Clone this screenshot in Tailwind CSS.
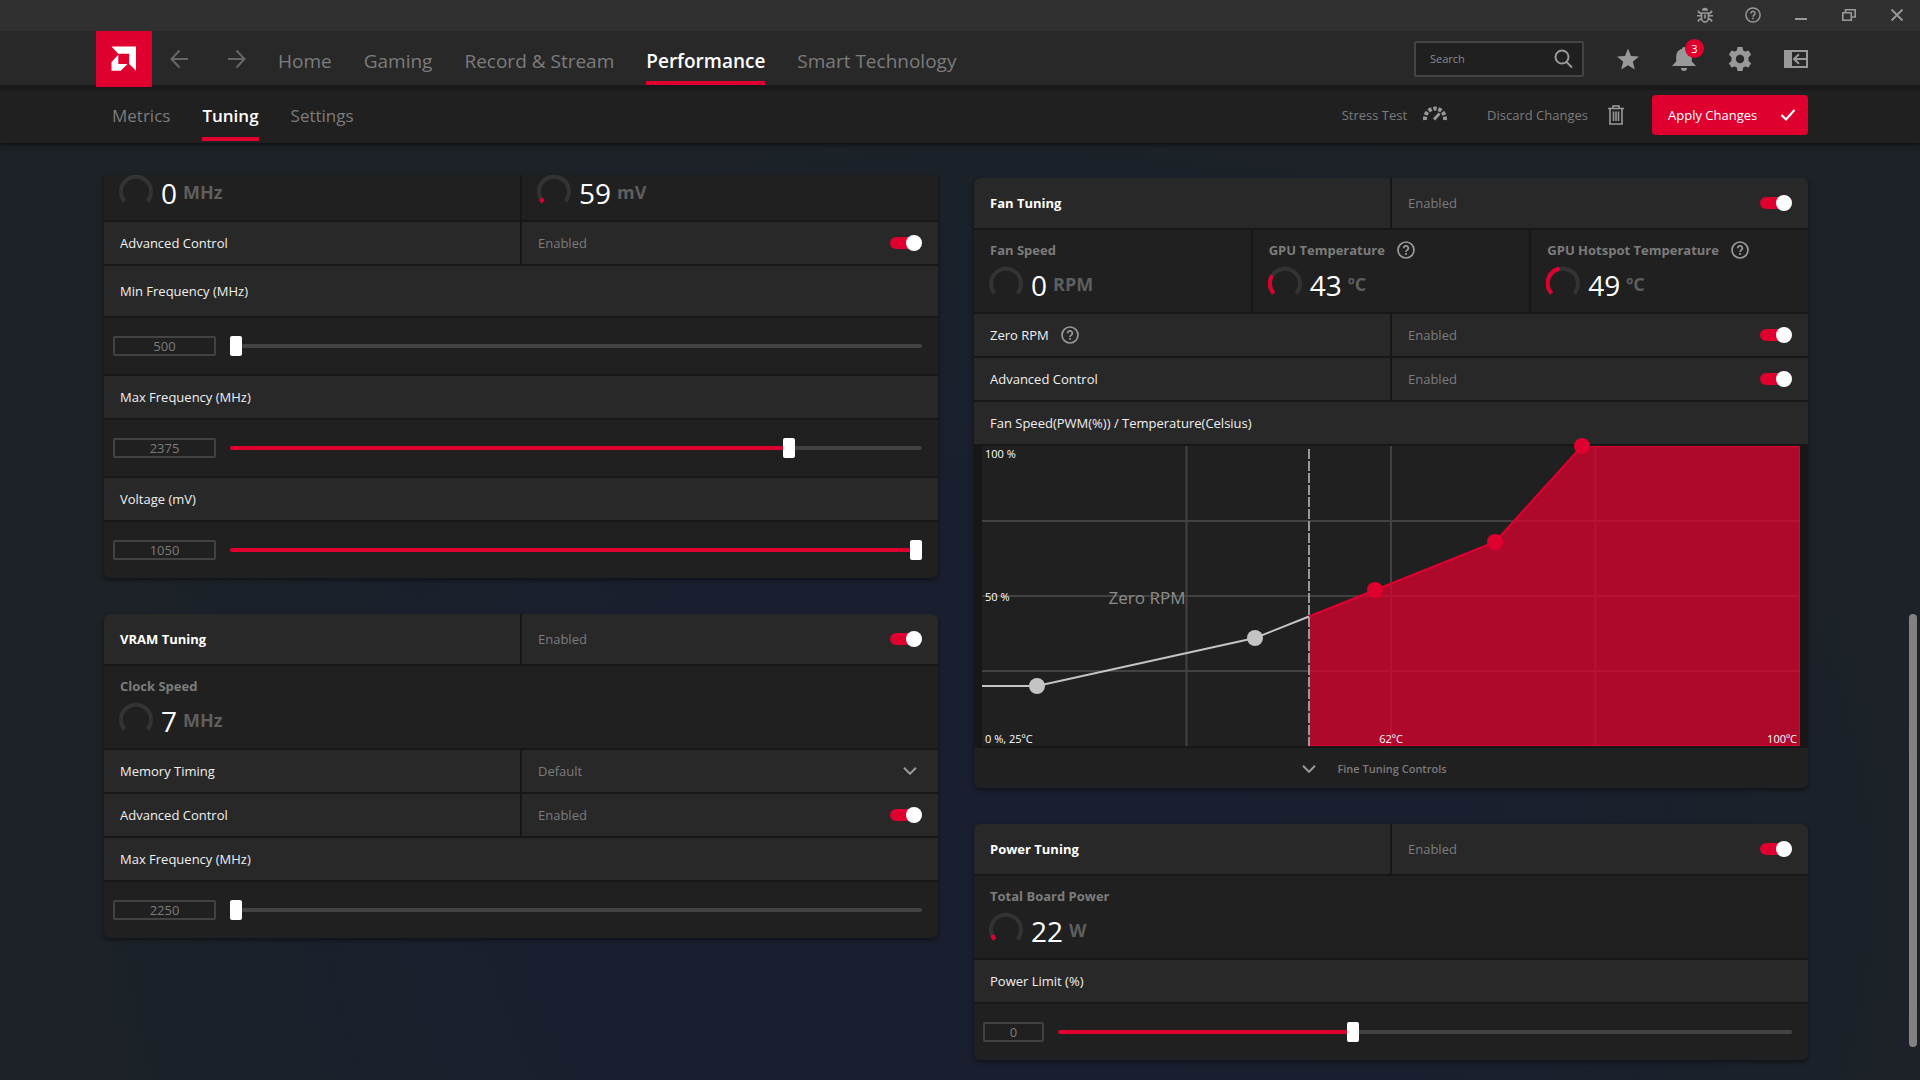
<!DOCTYPE html>
<html lang="en">
<head>
<meta charset="utf-8">
<meta name="viewport" content="width=device-width, initial-scale=1">
<title>Performance Tuning</title>
<script src="https://cdn.jsdelivr.net/npm/@tailwindcss/browser@4"></script>
</head>
<body class="relative flex min-h-screen flex-col overflow-x-hidden bg-[#1c2226] bg-[radial-gradient(ellipse_50%_75%_at_52%_82%,#191f30_0%,#191f2e_50%,#1c2227_100%)] font-['Open_Sans','Noto_Sans',sans-serif] text-[13px] leading-5 text-[#f0f0f0]">

<svg class="hidden" aria-hidden="true">
  <symbol id="help" viewBox="0 0 18 18"><circle cx="9" cy="9" r="8" fill="none" stroke="currentColor" stroke-width="1.7"/><path d="M6.7 7.2a2.3 2.3 0 1 1 3.5 1.9c-.8.5-1.2.9-1.2 1.8" fill="none" stroke="currentColor" stroke-width="1.7"/><rect x="8.1" y="12" width="1.8" height="1.8" fill="currentColor"/></symbol>
  <symbol id="ring" viewBox="0 0 34 34"><path d="M5.6 27.4A15 15 0 1 1 28.4 27.4" fill="none" stroke="#333" stroke-width="4"/></symbol>
</svg>

<!-- Window title bar -->
<div class="flex h-[31px] items-center justify-end gap-8 bg-[#303030] pr-[15px] pb-0.5 text-[#999]">
  <button aria-label="Report a bug"><svg class="size-4" viewBox="0 0 16 16" fill="none" stroke="currentColor" stroke-width="1.6"><path d="M4.6 6h6.8v5.5a3.4 3.4 0 0 1-6.8 0z"/><path d="M0 8.700h4.500M11.500 8.700h4.500M1.500 3.500v1.500l3 2M14.500 3.500v1.500l-3 2M1.500 14.800v-1.500l3-1.800M14.500 14.800v-1.500l-3-1.800M8 7.500v4"/><path d="M5 3.700a3 3 0 0 1 6 0z" fill="currentColor" stroke="none"/></svg></button>
  <button aria-label="Help"><svg class="size-4"><use href="#help"/></svg></button>
  <button aria-label="Minimize"><svg class="size-4" viewBox="0 0 16 16"><path d="M2 12h12" stroke="currentColor" stroke-width="2"/></svg></button>
  <button aria-label="Restore"><svg class="size-4" viewBox="0 0 16 16" fill="none" stroke="currentColor" stroke-width="1.6"><path d="M1.800 5.800h8.500v7.500H1.800zM4.500 5.500V2.800h9.700v7.200H11"/></svg></button>
  <button aria-label="Close"><svg class="size-4" viewBox="0 0 16 16"><path d="M2.500 2.500l11 11M13.500 2.500l-11 11" stroke="currentColor" stroke-width="1.8"/></svg></button>
</div>

<!-- Main navigation -->
<header class="relative z-20 flex h-[54px] bg-[#282828] pr-28 pl-24 shadow-[0_5px_1px_#191919]">
  <a href="#" aria-label="AMD Software" class="h-14 w-14 shrink-0 bg-[#e0002f]"><svg class="size-14" viewBox="0 0 56 56" fill="#fff"><path d="M15.500 15.500H40v24.300L33.200 33V22.700H22.300z"/><path d="M22.300 23.800L15.500 31v8.800h9.200L31.500 33H22.300z"/></svg></a>
  <div class="flex items-center gap-10 pt-0.5 pr-8 pl-[18px] text-[#666]">
    <button aria-label="Back"><svg class="h-5 w-[18px]" viewBox="0 0 18 20" fill="none" stroke="currentColor" stroke-width="2"><path d="M18 10H1.500M9.500 1.500L1.500 10l8 8.500"/></svg></button>
    <button aria-label="Forward"><svg class="h-5 w-[18px]" viewBox="0 0 18 20" fill="none" stroke="currentColor" stroke-width="2"><path d="M0 10h16.500M8.500 1.500l8 8.500-8 8.500"/></svg></button>
  </div>
  <nav class="flex gap-8 text-[19px] leading-[60px] whitespace-nowrap text-[#7c7c7c]">
    <a href="#">Home</a>
    <a href="#">Gaming</a>
    <a href="#">Record &amp; Stream</a>
    <a href="#" class="h-[54px] border-b-4 border-[#e0002f] font-semibold text-white">Performance</a>
    <a href="#">Smart Technology</a>
  </nav>
  <div class="ml-auto flex items-center pt-0.5 text-[#999]">
    <label class="flex h-9 w-[170px] items-center rounded-xs border-2 border-[#444] bg-[#202020] pr-[9px] pl-[14px]">
      <input type="search" placeholder="Search" aria-label="Search" class="w-full min-w-0 bg-transparent text-[11px] outline-none placeholder:text-[#8a8a8a]">
      <svg class="size-5 shrink-0" viewBox="0 0 20 20" fill="none" stroke="currentColor" stroke-width="2"><circle cx="9" cy="8" r="6.5"/><path d="M13.500 13l5.500 5.500"/></svg>
    </label>
    <div class="flex gap-8 pl-8">
      <button aria-label="Favorites"><svg class="size-6" viewBox="0 0 24 24" fill="currentColor"><path d="M12 1.500l3 7.600 8 .5-6.200 5.100 2.100 7.900L12 18.200l-6.900 4.400 2.100-7.900L1 9.600l8-.5z"/></svg></button>
      <button aria-label="Notifications" class="relative"><svg class="size-6" viewBox="0 0 24 24" fill="currentColor"><path d="M12 0c1.200 0 1.800.8 1.800 1.800C18 2.900 19.800 6 19.800 10v4.500L24 19H0l4.200-4.500V10c0-4 1.800-7.100 6-8.200C10.200.8 10.800 0 12 0zM9 21h6a3 3 0 0 1-6 0z"/></svg><span class="absolute -top-2 left-[13px] size-[19px] rounded-full bg-[#e0002f] text-center text-[11px] leading-[19px] text-white">3</span></button>
      <button aria-label="Preferences"><svg class="size-6" viewBox="0 0 24 24" fill="currentColor" fill-rule="evenodd"><path d="M9.500 0h5l.7 3.400 2.100 1.200 3.300-1.100L23.100 7.800 20.500 10.200v3.600l2.600 2.400-2.500 4.300-3.300-1.100-2.100 1.200-.7 3.400h-5l-.7-3.400-2.100-1.200-3.300 1.100L.9 16.200l2.600-2.400v-3.600L.9 7.800l2.500-4.300 3.300 1.100 2.100-1.200zM12 7.800a4.200 4.200 0 1 0 0 8.400 4.200 4.200 0 0 0 0-8.400z"/></svg></button>
      <button aria-label="Dock sidebar"><svg class="size-6" viewBox="0 0 24 24"><path d="M0 3h24v18H0zM8 5v14h14V5z" fill="currentColor" fill-rule="evenodd"/><path d="M23 12H10M15 7.300L10 12l5 4.700" fill="none" stroke="currentColor" stroke-width="2"/></svg></button>
    </div>
  </div>
</header>

<!-- Section navigation -->
<div class="relative z-10 flex h-[58px] items-stretch bg-[#202020] pr-28 pl-28 shadow-[0_2px_4px_#0008]">
  <nav class="flex gap-8 text-[17px] leading-[62px] whitespace-nowrap text-[#7c7c7c]">
    <a href="#">Metrics</a>
    <a href="#" class="h-14 border-b-4 border-[#e0002f] font-semibold text-white">Tuning</a>
    <a href="#">Settings</a>
  </nav>
  <div class="ml-auto flex items-center pt-0.5 whitespace-nowrap text-[#7c7c7c]">
    <button class="flex items-center gap-4 pr-10">Stress Test
      <svg class="mb-1 h-4 w-6 text-[#999]" viewBox="0 0 24 16" fill="none" stroke="currentColor"><path d="M2.100 15A10 10 0 1 1 21.900 15" stroke-width="4" pathLength="100" stroke-dasharray="10 5"/><path d="M11 14.500L16.500 8.500" stroke-width="2.800"/></svg>
    </button>
    <button class="flex items-center gap-5 pr-7">Discard Changes
      <svg class="h-5 w-4 text-[#999]" viewBox="0 0 16 20" fill="none" stroke="currentColor" stroke-width="1.6"><path d="M0 3.500h16M5 3V1h6v2M2 4v15h12V4M5.500 6.500v9.500M8 6.500v9.500M10.500 6.500v9.500"/></svg>
    </button>
    <button class="flex h-10 w-[156px] items-center justify-between rounded bg-[#e0002f] pr-3 pl-4 text-white">Apply Changes
      <svg class="size-4" viewBox="0 0 16 16" fill="none" stroke="currentColor" stroke-width="2.2"><path d="M1.500 8l4.500 4.500L14.500 3"/></svg>
    </button>
  </div>
</div>

<main class="grid grid-cols-2 items-start gap-9 pt-8 pr-28 pl-[104px]">
  <div class="flex flex-col gap-9">
    <!-- GPU tuning -->
    <section class="flex flex-col gap-0.5 overflow-hidden rounded-b-md bg-[#171717] shadow-[0_2px_4px_#0007]">
      <div class="grid h-[45px] grid-cols-2 gap-0.5">
        <div class="flex items-start gap-2 bg-[#202020] pl-[15px]"><svg class="-mt-px size-[34px]"><use href="#ring"/></svg><p class="-mt-px flex items-center gap-1.5"><span class="pt-0.5 text-[28px] leading-[34px] text-white">0</span><span class="text-[18px] font-bold text-[#5e5e5e]">MHz</span></p></div>
        <div class="flex items-start gap-2 bg-[#202020] pl-[15px]"><svg class="-mt-px size-[34px]" viewBox="0 0 34 34"><use href="#ring"/><path d="M6.200 28A15 15 0 0 1 3.800 24.800" fill="none" stroke="#e0002f" stroke-width="4"/></svg><p class="-mt-px flex items-center gap-1.5"><span class="pt-0.5 text-[28px] leading-[34px] text-white">59</span><span class="text-[18px] font-bold text-[#5e5e5e]">mV</span></p></div>
      </div>
      <label class="grid h-[42px] grid-cols-2 gap-0.5">
        <span class="flex items-center bg-[#282828] px-4">Advanced Control</span>
        <span class="flex items-center justify-between bg-[#282828] px-4 text-[#7c7c7c]">Enabled<input type="checkbox" checked class="relative h-4 w-8 appearance-none before:absolute before:inset-x-0 before:top-0.5 before:h-3 before:rounded-full before:bg-[#e0002f] after:absolute after:right-0 after:size-4 after:rounded-full after:bg-white"></span>
      </label>
      <h3 class="flex h-[50px] items-center bg-[#282828] px-4">Min Frequency (MHz)</h3>
      <div class="flex h-14 items-center gap-3.5 bg-[#202020] pr-4 pl-[9px]">
        <input type="text" value="500" aria-label="Min frequency value" class="h-5 w-[103px] shrink-0 rounded-xs border-2 border-[#424242] text-center text-[#7c7c7c]">
        <input type="range" min="0" max="100" value="0" aria-label="Min frequency" style="--v:0%" class="h-5 w-full min-w-0 appearance-none bg-transparent [&::-webkit-slider-runnable-track]:h-1 [&::-webkit-slider-runnable-track]:rounded-sm [&::-webkit-slider-runnable-track]:bg-[linear-gradient(to_right,#e0002f_var(--v),#424242_var(--v))] [&::-webkit-slider-thumb]:-mt-2 [&::-webkit-slider-thumb]:h-5 [&::-webkit-slider-thumb]:w-3 [&::-webkit-slider-thumb]:appearance-none [&::-webkit-slider-thumb]:rounded-xs [&::-webkit-slider-thumb]:bg-white">
      </div>
      <h3 class="flex h-[42px] items-center bg-[#282828] px-4">Max Frequency (MHz)</h3>
      <div class="flex h-14 items-center gap-3.5 bg-[#202020] pr-4 pl-[9px]">
        <input type="text" value="2375" aria-label="Max frequency value" class="h-5 w-[103px] shrink-0 rounded-xs border-2 border-[#424242] text-center text-[#7c7c7c]">
        <input type="range" min="0" max="1000" value="813" aria-label="Max frequency" style="--v:81%" class="h-5 w-full min-w-0 appearance-none bg-transparent [&::-webkit-slider-runnable-track]:h-1 [&::-webkit-slider-runnable-track]:rounded-sm [&::-webkit-slider-runnable-track]:bg-[linear-gradient(to_right,#e0002f_var(--v),#424242_var(--v))] [&::-webkit-slider-thumb]:-mt-2 [&::-webkit-slider-thumb]:h-5 [&::-webkit-slider-thumb]:w-3 [&::-webkit-slider-thumb]:appearance-none [&::-webkit-slider-thumb]:rounded-xs [&::-webkit-slider-thumb]:bg-white">
      </div>
      <h3 class="flex h-[42px] items-center bg-[#282828] px-4">Voltage (mV)</h3>
      <div class="flex h-14 items-center gap-3.5 bg-[#202020] pr-4 pl-[9px]">
        <input type="text" value="1050" aria-label="Voltage value" class="h-5 w-[103px] shrink-0 rounded-xs border-2 border-[#424242] text-center text-[#7c7c7c]">
        <input type="range" min="0" max="100" value="100" aria-label="Voltage" style="--v:100%" class="h-5 w-full min-w-0 appearance-none bg-transparent [&::-webkit-slider-runnable-track]:h-1 [&::-webkit-slider-runnable-track]:rounded-sm [&::-webkit-slider-runnable-track]:bg-[linear-gradient(to_right,#e0002f_var(--v),#424242_var(--v))] [&::-webkit-slider-thumb]:-mt-2 [&::-webkit-slider-thumb]:h-5 [&::-webkit-slider-thumb]:w-3 [&::-webkit-slider-thumb]:appearance-none [&::-webkit-slider-thumb]:rounded-xs [&::-webkit-slider-thumb]:bg-white">
      </div>
    </section>

    <!-- VRAM tuning -->
    <section class="flex flex-col gap-0.5 overflow-hidden rounded-md bg-[#171717] shadow-[0_2px_4px_#0007]">
      <label class="grid h-[50px] grid-cols-2 gap-0.5">
        <span class="flex items-center bg-[#282828] px-4 font-bold text-white">VRAM Tuning</span>
        <span class="flex items-center justify-between bg-[#282828] px-4 text-[#7c7c7c]">Enabled<input type="checkbox" checked class="relative h-4 w-8 appearance-none before:absolute before:inset-x-0 before:top-0.5 before:h-3 before:rounded-full before:bg-[#e0002f] after:absolute after:right-0 after:size-4 after:rounded-full after:bg-white"></span>
      </label>
      <div class="flex h-[82px] flex-col gap-1.5 bg-[#202020] pt-2.5 pl-[15px]">
        <h4 class="pl-px font-bold text-[#7c7c7c]">Clock Speed</h4>
        <div class="flex gap-2"><svg class="size-[34px]"><use href="#ring"/></svg><p class="flex items-center gap-1.5"><span class="pt-0.5 text-[28px] leading-[34px] text-white">7</span><span class="text-[18px] font-bold text-[#5e5e5e]">MHz</span></p></div>
      </div>
      <label class="grid h-[42px] grid-cols-2 gap-0.5">
        <span class="flex items-center bg-[#282828] px-4">Memory Timing</span>
        <span class="flex items-center bg-[#282828] px-4 text-[#7c7c7c]">
          <select class="h-full w-full appearance-none bg-transparent"><option>Default</option></select>
          <svg class="mr-1 h-2 w-4 shrink-0 text-[#999]" viewBox="0 0 16 8" fill="none" stroke="currentColor" stroke-width="2"><path d="M2 .800l6 6 6-6"/></svg>
        </span>
      </label>
      <label class="grid h-[42px] grid-cols-2 gap-0.5">
        <span class="flex items-center bg-[#282828] px-4">Advanced Control</span>
        <span class="flex items-center justify-between bg-[#282828] px-4 text-[#7c7c7c]">Enabled<input type="checkbox" checked class="relative h-4 w-8 appearance-none before:absolute before:inset-x-0 before:top-0.5 before:h-3 before:rounded-full before:bg-[#e0002f] after:absolute after:right-0 after:size-4 after:rounded-full after:bg-white"></span>
      </label>
      <h3 class="flex h-[42px] items-center bg-[#282828] px-4">Max Frequency (MHz)</h3>
      <div class="flex h-14 items-center gap-3.5 bg-[#202020] pr-4 pl-[9px]">
        <input type="text" value="2250" aria-label="VRAM max frequency value" class="h-5 w-[103px] shrink-0 rounded-xs border-2 border-[#424242] text-center text-[#7c7c7c]">
        <input type="range" min="0" max="100" value="0" aria-label="VRAM max frequency" style="--v:0%" class="h-5 w-full min-w-0 appearance-none bg-transparent [&::-webkit-slider-runnable-track]:h-1 [&::-webkit-slider-runnable-track]:rounded-sm [&::-webkit-slider-runnable-track]:bg-[linear-gradient(to_right,#e0002f_var(--v),#424242_var(--v))] [&::-webkit-slider-thumb]:-mt-2 [&::-webkit-slider-thumb]:h-5 [&::-webkit-slider-thumb]:w-3 [&::-webkit-slider-thumb]:appearance-none [&::-webkit-slider-thumb]:rounded-xs [&::-webkit-slider-thumb]:bg-white">
      </div>
    </section>
  </div>

  <div class="flex flex-col gap-9 pt-[3px]">
    <!-- Fan tuning -->
    <section class="flex flex-col gap-0.5 overflow-hidden rounded-md bg-[#171717] shadow-[0_2px_4px_#0007]">
      <label class="grid h-[50px] grid-cols-2 gap-0.5">
        <span class="flex items-center bg-[#282828] px-4 font-bold text-white">Fan Tuning</span>
        <span class="flex items-center justify-between bg-[#282828] px-4 text-[#7c7c7c]">Enabled<input type="checkbox" checked class="relative h-4 w-8 appearance-none before:absolute before:inset-x-0 before:top-0.5 before:h-3 before:rounded-full before:bg-[#e0002f] after:absolute after:right-0 after:size-4 after:rounded-full after:bg-white"></span>
      </label>
      <div class="grid h-[82px] grid-cols-3 gap-0.5">
        <div class="flex flex-col gap-1.5 bg-[#202020] pt-2.5 pl-[15px]">
          <h4 class="pl-px font-bold text-[#7c7c7c]">Fan Speed</h4>
          <div class="flex gap-2"><svg class="size-[34px]"><use href="#ring"/></svg><p class="flex items-center gap-1.5"><span class="pt-0.5 text-[28px] leading-[34px] text-white">0</span><span class="text-[18px] font-bold text-[#5e5e5e]">RPM</span></p></div>
        </div>
        <div class="flex flex-col gap-1.5 bg-[#202020] pt-2.5 pl-[15px]">
          <h4 class="flex items-center gap-3 pl-px font-bold text-[#7c7c7c]">GPU Temperature<svg class="size-[18px] text-[#999]"><use href="#help"/></svg></h4>
          <div class="flex gap-2"><svg class="size-[34px]" viewBox="0 0 34 34"><use href="#ring"/><path d="M5.600 27.400A15 15 0 0 1 4 9.500" fill="none" stroke="#e0002f" stroke-width="4"/></svg><p class="flex items-center gap-1.5"><span class="pt-0.5 text-[28px] leading-[34px] text-white">43</span><span class="text-[18px] font-bold text-[#5e5e5e]">ºC</span></p></div>
        </div>
        <div class="flex flex-col gap-1.5 bg-[#202020] pt-2.5 pl-[15px]">
          <h4 class="flex items-center gap-3 pl-px font-bold text-[#7c7c7c]">GPU Hotspot Temperature<svg class="size-[18px] text-[#999]"><use href="#help"/></svg></h4>
          <div class="flex gap-2"><svg class="size-[34px]" viewBox="0 0 34 34"><use href="#ring"/><path d="M5.600 27.400A15 15 0 0 1 13.500 2.500" fill="none" stroke="#e0002f" stroke-width="4"/></svg><p class="flex items-center gap-1.5"><span class="pt-0.5 text-[28px] leading-[34px] text-white">49</span><span class="text-[18px] font-bold text-[#5e5e5e]">ºC</span></p></div>
        </div>
      </div>
      <label class="grid h-[42px] grid-cols-2 gap-0.5">
        <span class="flex items-center gap-3 bg-[#282828] px-4">Zero RPM<svg class="size-[18px] text-[#999]"><use href="#help"/></svg></span>
        <span class="flex items-center justify-between bg-[#282828] px-4 text-[#7c7c7c]">Enabled<input type="checkbox" checked class="relative h-4 w-8 appearance-none before:absolute before:inset-x-0 before:top-0.5 before:h-3 before:rounded-full before:bg-[#e0002f] after:absolute after:right-0 after:size-4 after:rounded-full after:bg-white"></span>
      </label>
      <label class="grid h-[42px] grid-cols-2 gap-0.5">
        <span class="flex items-center bg-[#282828] px-4">Advanced Control</span>
        <span class="flex items-center justify-between bg-[#282828] px-4 text-[#7c7c7c]">Enabled<input type="checkbox" checked class="relative h-4 w-8 appearance-none before:absolute before:inset-x-0 before:top-0.5 before:h-3 before:rounded-full before:bg-[#e0002f] after:absolute after:right-0 after:size-4 after:rounded-full after:bg-white"></span>
      </label>
      <h3 class="flex h-[42px] items-center bg-[#282828] px-4">Fan Speed(PWM(%)) / Temperature(Celsius)</h3>
      <div class="px-2">
        <svg class="block h-auto w-full overflow-visible text-[11px]" viewBox="0 0 818 300" role="img" aria-label="Fan curve">
          <rect width="818" height="300" fill="#202020"/>
          <path d="M0 75H818M0 150H818M0 225H818M204.500 0V300M409 0V300M613.500 0V300" stroke="#424242" stroke-width="2"/>
          <text x="165" y="158" text-anchor="middle" font-size="17" fill="#8c8c8c">Zero RPM</text>
          <path d="M327 170.500L393 144L513 96L600 0H818V300H327z" fill="#e0002f" fill-opacity=".74"/>
          <path d="M327 170.500L393 144L513 96L600 0" fill="none" stroke="#e0002f" stroke-width="2"/>
          <path d="M600 .500H817.500V299.500H327" fill="none" stroke="#e0002f"/>
          <path d="M327 3V300" stroke="#999" stroke-width="2" stroke-dasharray="10 2"/>
          <path d="M0 240H55L273 192L327 170.500" fill="none" stroke="#c4c4c4" stroke-width="2"/>
          <g fill="#c4c4c4"><circle cx="55" cy="240" r="8"/><circle cx="273" cy="192" r="8"/></g>
          <g fill="#e0002f"><circle cx="393" cy="144" r="8"/><circle cx="513" cy="96" r="8"/><circle cx="600" cy="0" r="8"/></g>
          <g fill="#fff"><text x="3" y="12">100 %</text><text x="3" y="155">50 %</text><text x="3" y="297">0 %, 25ºC</text><text x="409" y="297" text-anchor="middle">62ºC</text><text x="815" y="297" text-anchor="end">100ºC</text></g>
        </svg>
      </div>
      <button class="flex h-10 items-center justify-center gap-5 bg-[#202020] pt-px pr-[34px] text-[11px] font-semibold text-[#7c7c7c]"><svg class="h-2 w-4 text-[#999]" viewBox="0 0 16 8" fill="none" stroke="currentColor" stroke-width="2"><path d="M2 .800l6 6 6-6"/></svg>Fine Tuning Controls</button>
    </section>

    <!-- Power tuning -->
    <section class="flex flex-col gap-0.5 overflow-hidden rounded-md bg-[#171717] shadow-[0_2px_4px_#0007]">
      <label class="grid h-[50px] grid-cols-2 gap-0.5">
        <span class="flex items-center bg-[#282828] px-4 font-bold text-white">Power Tuning</span>
        <span class="flex items-center justify-between bg-[#282828] px-4 text-[#7c7c7c]">Enabled<input type="checkbox" checked class="relative h-4 w-8 appearance-none before:absolute before:inset-x-0 before:top-0.5 before:h-3 before:rounded-full before:bg-[#e0002f] after:absolute after:right-0 after:size-4 after:rounded-full after:bg-white"></span>
      </label>
      <div class="flex h-[82px] flex-col gap-1.5 bg-[#202020] pt-2.5 pl-[15px]">
        <h4 class="pl-px font-bold text-[#7c7c7c]">Total Board Power</h4>
        <div class="flex gap-2"><svg class="size-[34px]" viewBox="0 0 34 34"><use href="#ring"/><path d="M5.600 27.400A15 15 0 0 1 3.200 23" fill="none" stroke="#e0002f" stroke-width="4"/></svg><p class="flex items-center gap-1.5"><span class="pt-0.5 text-[28px] leading-[34px] text-white">22</span><span class="text-[18px] font-bold text-[#5e5e5e]">W</span></p></div>
      </div>
      <h3 class="flex h-[42px] items-center bg-[#282828] px-4">Power Limit (%)</h3>
      <div class="flex h-14 items-center gap-3.5 bg-[#202020] pr-4 pl-[9px]">
        <input type="text" value="0" aria-label="Power limit value" class="h-5 w-[61px] shrink-0 rounded-xs border-2 border-[#424242] text-center text-[#7c7c7c]">
        <input type="range" min="0" max="100" value="40" aria-label="Power limit" style="--v:40%" class="h-5 w-full min-w-0 appearance-none bg-transparent [&::-webkit-slider-runnable-track]:h-1 [&::-webkit-slider-runnable-track]:rounded-sm [&::-webkit-slider-runnable-track]:bg-[linear-gradient(to_right,#e0002f_var(--v),#424242_var(--v))] [&::-webkit-slider-thumb]:-mt-2 [&::-webkit-slider-thumb]:h-5 [&::-webkit-slider-thumb]:w-3 [&::-webkit-slider-thumb]:appearance-none [&::-webkit-slider-thumb]:rounded-xs [&::-webkit-slider-thumb]:bg-white">
      </div>
    </section>
  </div>
</main>

<!-- Scroll indicator -->
<div class="absolute top-[614px] right-[3px] h-[433px] w-2 rounded-full bg-[#828282]"></div>
</body>
</html>
